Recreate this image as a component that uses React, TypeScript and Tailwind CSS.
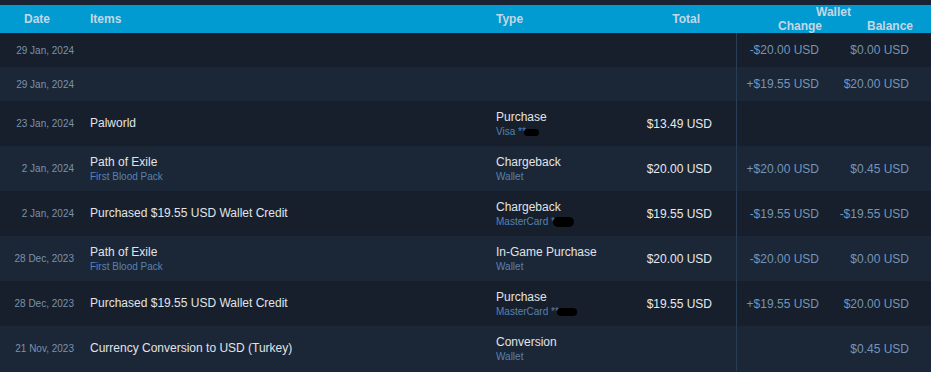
type Row = {
  date: string
  item?: string
  sub?: string
  type?: string
  pay?: string
  blob?: [number, number]
  total?: string
  change?: string
  balance?: string
}

const rows: Row[] = [
  { date: "29 Jan, 2024", change: "-$20.00 USD", balance: "$0.00 USD" },
  { date: "29 Jan, 2024", change: "+$19.55 USD", balance: "$20.00 USD" },
  { date: "23 Jan, 2024", item: "Palworld", type: "Purchase", pay: "Visa **", blob: [15, 7], total: "$13.49 USD" },
  {
    date: "2 Jan, 2024",
    item: "Path of Exile",
    sub: "First Blood Pack",
    type: "Chargeback",
    pay: "Wallet",
    total: "$20.00 USD",
    change: "+$20.00 USD",
    balance: "$0.45 USD",
  },
  {
    date: "2 Jan, 2024",
    item: "Purchased $19.55 USD Wallet Credit",
    type: "Chargeback",
    pay: "MasterCard *",
    blob: [21, 10],
    total: "$19.55 USD",
    change: "-$19.55 USD",
    balance: "-$19.55 USD",
  },
  {
    date: "28 Dec, 2023",
    item: "Path of Exile",
    sub: "First Blood Pack",
    type: "In-Game Purchase",
    pay: "Wallet",
    total: "$20.00 USD",
    change: "-$20.00 USD",
    balance: "$0.00 USD",
  },
  {
    date: "28 Dec, 2023",
    item: "Purchased $19.55 USD Wallet Credit",
    type: "Purchase",
    pay: "MasterCard **",
    blob: [20, 8],
    total: "$19.55 USD",
    change: "+$19.55 USD",
    balance: "$20.00 USD",
  },
  {
    date: "21 Nov, 2023",
    item: "Currency Conversion to USD (Turkey)",
    type: "Conversion",
    pay: "Wallet",
    balance: "$0.45 USD",
  },
]

function HistoryRow({ row, odd }: { row: Row; odd: boolean }) {
  const tall = !!row.type
  return (
    <div
      className={`flex items-stretch ${tall ? "h-[45px]" : "h-[34px]"} ${odd ? "bg-[#1b2637]" : "bg-[#161f2b]"}`}
    >
      <div className="w-[74px] shrink-0 flex items-center justify-end text-[10px] text-[#7b92ab] whitespace-nowrap">
        {row.date}
      </div>
      <div className="w-[406px] ml-4 shrink-0 flex flex-col justify-center">
        {row.item && <div className="text-[12px] leading-[15px] text-[#e0e4e8]">{row.item}</div>}
        {row.sub && <div className="text-[10px] leading-[13px] text-[#5783b0]">{row.sub}</div>}
      </div>
      <div className="w-[150px] shrink-0 flex flex-col justify-center">
        {row.type && <div className="text-[12px] leading-[15px] text-[#e0e4e8]">{row.type}</div>}
        {row.pay && (
          <div className="text-[10px] leading-[13px] text-[#5783b0] whitespace-nowrap flex items-center">
            <span>{row.pay}</span>
            {row.blob && (
              <span
                className="inline-block bg-black rounded-full -ml-[2px] mt-[2px]"
                style={{ width: row.blob[0], height: row.blob[1] }}
              />
            )}
          </div>
        )}
      </div>
      <div className="w-[66px] shrink-0 flex items-center justify-end text-[12px] text-[#e6eaee] whitespace-nowrap">
        {row.total}
      </div>
      <div className="w-[24px] shrink-0" />
      <div className="w-[83px] shrink-0 border-l border-[#2a3d57] flex items-center justify-end text-[12px] text-[#7495b8] whitespace-nowrap">
        {row.change}
      </div>
      <div className="w-[90px] shrink-0 flex items-center justify-end text-[12px] text-[#7495b8] whitespace-nowrap">
        {row.balance}
      </div>
    </div>
  )
}

export default function App() {
  return (
    <div className="h-screen w-full overflow-hidden bg-[#1b2637] font-['Liberation_Sans',Arial,sans-serif]">
      <div className="h-[5px] bg-[#1a2333]" />
      <div className="h-[28px] bg-[#019ad1] flex items-stretch text-[12px] font-bold text-[#c5d6e4]">
        <div className="w-[74px] shrink-0 flex items-center justify-center">Date</div>
        <div className="w-[406px] ml-4 shrink-0 flex items-center">Items</div>
        <div className="w-[150px] shrink-0 flex items-center">Type</div>
        <div className="w-[54px] shrink-0 flex items-center justify-end">Total</div>
        <div className="w-[36px] shrink-0" />
        <div className="w-[195px] shrink-0 flex flex-col leading-[14px]">
          <div className="text-center">Wallet</div>
          <div className="flex">
            <div className="w-[86px] text-right">Change</div>
            <div className="w-[91px] text-right">Balance</div>
          </div>
        </div>
      </div>
      {rows.map((row, i) => (
        <HistoryRow key={i} row={row} odd={i % 2 === 1} />
      ))}
    </div>
  )
}
